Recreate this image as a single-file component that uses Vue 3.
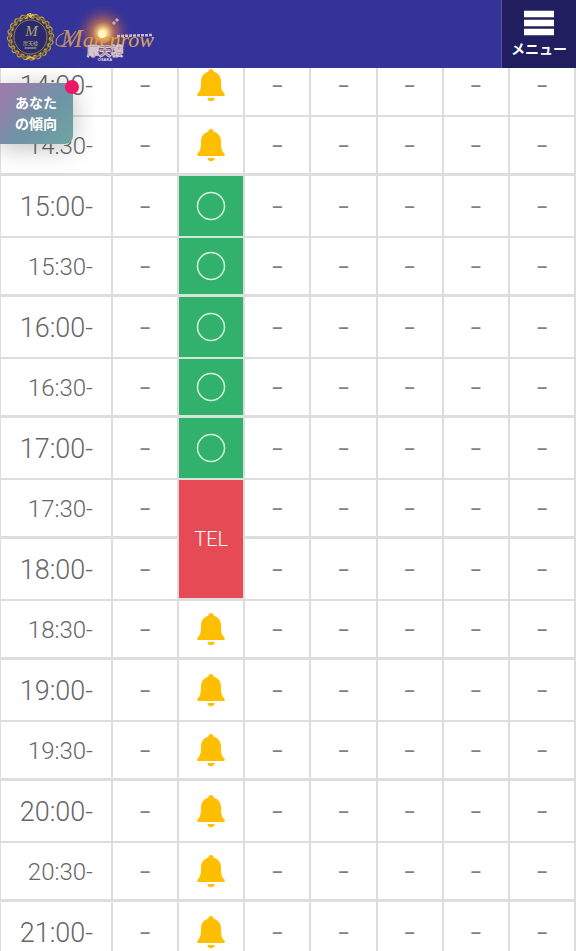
<script setup>
const times = []
for (let h = 14; h <= 21; h++) {
  times.push({ label: `${h}:00-`, hour: true })
  if (h < 21) times.push({ label: `${h}:30-`, hour: false })
}
const open = ['15:00-', '15:30-', '16:00-', '16:30-', '17:00-']
const statusOf = (label) => {
  if (open.includes(label)) return 'open'
  if (label === '17:30-') return 'tel'
  if (label === '18:00-') return 'covered'
  return 'bell'
}
const rows = times.map((t) => ({ ...t, status: statusOf(t.label) }))
const leaves = Array.from({ length: 20 }, (_, i) => i * 18)
</script>

<template>
  <div class="page">
    <header class="bar">
      <a class="brand" href="#" aria-label="Matenrow">
        <svg class="logo" viewBox="0 0 170 68" width="170" height="68" aria-hidden="true">
          <defs>
            <radialGradient id="flare">
              <stop offset="0" stop-color="#fffbe0" />
              <stop offset="0.14" stop-color="#ffd884" />
              <stop offset="0.38" stop-color="#c87550" stop-opacity="0.8" />
              <stop offset="1" stop-color="#5a347e" stop-opacity="0" />
            </radialGradient>
            <linearGradient id="gold" x1="0" y1="0" x2="1" y2="1">
              <stop offset="0" stop-color="#d7b747" />
              <stop offset="0.5" stop-color="#8c7136" />
              <stop offset="1" stop-color="#e0c95b" />
            </linearGradient>
            <linearGradient id="script" x1="0" x2="1">
              <stop offset="0" stop-color="#b98a6c" />
              <stop offset="0.5" stop-color="#e6a32f" />
              <stop offset="1" stop-color="#d7a66d" />
            </linearGradient>
          </defs>
          <g transform="translate(30.500 37)">
            <ellipse rx="18" ry="19" fill="#2b2a70" stroke="#3c3554" stroke-width="2" />
            <ellipse rx="16.500" ry="17" fill="none" stroke="#a08a48" stroke-width="0.900" />
            <g v-for="a in leaves" :key="a" :transform="`rotate(${a})`">
              <path d="M-3-19C-5-24 1-24 1-21C4-24 4-19 1-19C0-21-2-21-3-19Z" fill="#3c3554" stroke="url(#gold)" stroke-width="1.200" />
            </g>
            <path d="M-3-23L0-20L3-23M0-24V-20M-4 22L0 20L4 22" fill="none" stroke="#dec453" stroke-width="1.500" />
            <text x="1" y="-1" class="initial">M</text>
            <text x="0" y="8" class="tiny">摩天楼</text>
            <path d="M-6 11H6" stroke="#9a8b6a" stroke-width="1.500" />
          </g>
          <circle cx="103" cy="33" r="29" fill="url(#flare)" />
          <path d="M64 33C54 37 54 47 61 46C67 45 72 36 76 31" fill="none" stroke="#b98a6c" stroke-width="1.200" />
          <text x="61" y="47" class="wordmark" fill="url(#script)"><tspan class="cap">M</tspan>atenrow</text>
          <path d="M117 36L153 35" stroke="#d0b9cb" stroke-width="2.500" stroke-dasharray="3 1" />
          <text x="105" y="56" class="kanji">摩天楼</text>
          <text x="105" y="61" class="place">OSAKA</text>
          <circle cx="102" cy="34" r="4" fill="#fff6c5" />
          <path d="M113 24L115 22M116 21L118 19" stroke="#d5a8b0" stroke-width="3" />
        </svg>
      </a>
      <button class="menu" type="button">
        <svg viewBox="0 0 30 26" width="30" height="26" aria-hidden="true">
          <path d="M0 4H30M0 13H30M0 22H30" stroke="#fff" stroke-width="6.500" />
        </svg>
        <span>メニュー</span>
      </button>
    </header>

    <a class="trend" href="#">あなた<br />の傾向<i class="dot"></i></a>

    <main class="schedule">
      <table>
        <colgroup>
          <col class="time-col" />
          <col v-for="d in 7" :key="d" />
        </colgroup>
        <tbody>
          <tr v-for="row in rows" :key="row.label" :class="row.hour ? 'hour' : 'half'">
            <th scope="row">{{ row.label }}</th>
            <td class="none">–</td>
            <td v-if="row.status === 'open'" class="open">
              <a href="#" aria-label="○">
                <svg viewBox="0 0 30 30" width="30" height="30"><circle cx="15" cy="15" r="13.500" fill="none" stroke="#d4f4de" stroke-width="1.500" /></svg>
              </a>
            </td>
            <td v-else-if="row.status === 'tel'" class="tel" rowspan="2"><a href="#">TEL</a></td>
            <td v-else-if="row.status === 'bell'">
              <button class="bell" type="button" aria-label="通知">
                <svg viewBox="0 0 28 34" width="28" height="34">
                  <path d="M14 1C12.300 1 11.400 2.200 11.300 3.700C6.700 4.900 4 8.500 4 13.500C4 20 3.400 22.800 1 25C-.3 26.300 0 28 1.700 28H26.300C28 28 28.300 26.300 27 25C24.600 22.800 24 20 24 13.500C24 8.500 21.300 4.900 16.700 3.700C16.600 2.200 15.700 1 14 1Z" fill="#ffbf00" />
                  <path d="M10.300 30H17.700C17.300 32.200 16 33.300 14 33.300C12 33.300 10.700 32.200 10.300 30Z" fill="#ffbf00" />
                </svg>
              </button>
            </td>
            <td v-for="d in 5" :key="d" class="none">–</td>
          </tr>
        </tbody>
      </table>
    </main>
  </div>
</template>

<style>
body {
  background: #fff;
}
</style>

<style scoped>
.page {
  position: relative;
  height: 100vh;
  overflow: hidden;
  font-family: Roboto, "Noto Sans CJK JP", sans-serif;
}
.bar {
  position: relative;
  z-index: 2;
  display: flex;
  justify-content: space-between;
  height: 68px;
  background: #333399;
}
.logo {
  display: block;
}
.initial {
  font: italic 15px "Liberation Serif", serif;
  fill: #b1a16f;
  text-anchor: middle;
}
.tiny {
  font: 5px "Noto Sans CJK JP", sans-serif;
  fill: #b8a878;
  text-anchor: middle;
}
.wordmark {
  font: italic 22px "Liberation Serif", serif;
}
.cap {
  font-size: 26px;
}
.kanji {
  font: bold 12px "Noto Sans CJK JP", sans-serif;
  fill: #55435f;
  stroke: #d8c6cf;
  stroke-width: 1px;
  text-anchor: middle;
}
.place {
  font: bold 4px "Liberation Sans", sans-serif;
  fill: #e6dfe8;
  text-anchor: middle;
}
.menu {
  display: flex;
  flex-direction: column;
  align-items: center;
  gap: 2px;
  width: 75px;
  padding: 10px 0 0;
  border: 0;
  border-left: 1px solid #5555a0;
  background: #201e5e;
  color: #fff;
  font: bold 14px/20px "Noto Sans CJK JP", sans-serif;
}
.trend {
  position: absolute;
  z-index: 3;
  top: 83px;
  left: 0;
  padding: 9px 16px 10px 15px;
  border-radius: 0 8px 8px 0;
  background: linear-gradient(135deg, #a478ad, #6f93a5 55%, #6ea5a2);
  box-shadow: 0 4px 24px rgba(0, 0, 0, 0.25);
  color: #fff;
  font: bold 14px/21px "Noto Sans CJK JP", sans-serif;
  text-decoration: none;
}
.dot {
  position: absolute;
  top: -3px;
  right: -6px;
  width: 14px;
  height: 14px;
  border-radius: 50%;
  background: #ec1768;
}
.schedule {
  margin-top: -13px;
}
table {
  width: 100%;
  table-layout: fixed;
  border-collapse: separate;
  border-spacing: 0;
  border-left: 1px solid #ddd;
}
.time-col {
  width: 112px;
}
th,
td {
  box-sizing: border-box;
  padding: 0;
  border-right: 2px solid #ddd;
  border-bottom: 2px solid #ddd;
  text-align: center;
  vertical-align: middle;
}
.hour > * {
  height: 62px;
}
.half > * {
  height: 59px;
  border-bottom-width: 3px;
}
th {
  padding-top: 2px;
  padding-right: 18px;
  color: #666;
  font-weight: 300;
  text-align: right;
}
.hour th {
  font-size: 27px;
}
.half th {
  font-size: 24px;
}
.none {
  padding-top: 2px;
  color: #808080;
  font-size: 18px;
  font-weight: 500;
}
.open {
  background: #32b16c;
}
.tel {
  background: #e64b55;
}
.hour .open,
.half .open {
  border-bottom-color: #d3e6da;
}
td a {
  display: block;
  color: #fff;
  font-size: 20px;
  font-weight: 300;
  text-decoration: none;
}
td svg {
  display: block;
  margin: 0 auto;
}
.bell {
  display: block;
  margin: 0 auto;
  padding: 0;
  border: 0;
  background: none;
}
</style>
